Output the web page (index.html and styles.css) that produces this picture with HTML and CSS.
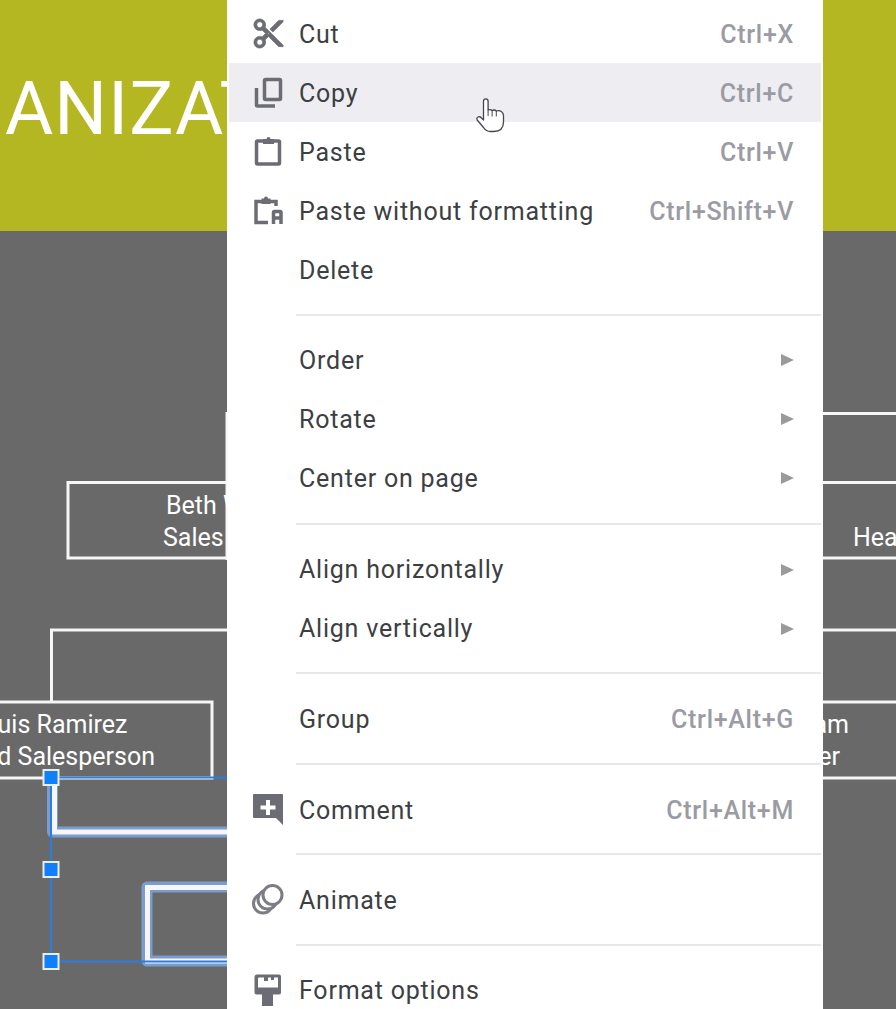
FILE: index.html
```html
<!DOCTYPE html>
<html>
  <head>
    <title>Slide context menu</title>
    <link rel="stylesheet" href="styles.css">
  </head>
  <body>
    <div id="slide">
      <div id="slide-header"><span id="slide-title">ANIZATION</span></div>

      <!-- Org chart lines and the selected group -->
      <svg id="chart" width="896" height="1009" viewBox="0 0 896 1009">
        <g class="line">
          <path d="M227 412V560"/>
          <path d="M823 413.500H896"/>
          <path d="M230 482.500H68V558H230"/>
          <path d="M823 482.500H896"/>
          <path d="M823 558H896"/>
          <path d="M230 630H51.500V702"/>
          <path d="M823 630H896"/>
          <path d="M0 702H212V778H0"/>
          <path d="M823 702H896"/>
          <path d="M823 778H896"/>
        </g>
        <g class="glow">
          <path d="M52.500 784V832H230"/>
          <path d="M230 887H147V961H230"/>
        </g>
        <g class="line-thick">
          <path d="M54.500 784V832H230"/>
          <path d="M230 887.500H147.500V961H230"/>
        </g>
        <path class="frame" d="M230 777.500H51V961.500H230"/>
        <rect class="handle" x="43.500" y="770" width="15" height="15"/>
        <rect class="handle" x="43.500" y="862" width="15" height="15"/>
        <rect class="handle" x="43.500" y="954" width="15" height="15"/>
      </svg>

      <div class="node-text beth"><div class="beth-name">Beth W</div><div>Sales</div></div>
      <div class="node-text luis"><div>Luis Ramirez</div><div>Lead Salesperson</div></div>
      <div class="node-text head">Hea</div>
      <div class="node-text team"><div>am</div><div class="team-role">er</div></div>
    </div>

    <div id="menu">
      <div class="item">
        <svg class="icon" viewBox="0 0 24 24"><path class="solid heavy" d="M9.640 7.640c.23-.5.36-1.050.36-1.640 0-2.210-1.790-4-4-4S2 3.790 2 6s1.790 4 4 4c.59 0 1.140-.13 1.640-.36L10 12l-2.360 2.360C7.140 14.130 6.590 14 6 14c-2.210 0-4 1.790-4 4s1.790 4 4 4 4-1.790 4-4c0-.59-.13-1.140-.36-1.640L12 14l7 7h3v-1L9.640 7.640zM6 8c-1.100 0-2-.89-2-2s.9-2 2-2 2 .89 2 2-.9 2-2 2zm0 12c-1.100 0-2-.89-2-2s.9-2 2-2 2 .89 2 2-.9 2-2 2zm6-7.500c-.28 0-.5-.22-.5-.5s.22-.5.5-.5.5.22.5.5-.22.5-.5.5zM19 3l-6 6 2 2 7-7V3h-3z"/></svg>
        <span class="label">Cut</span><span class="keys">Ctrl+X</span>
      </div>
      <div class="item active">
        <svg class="icon" viewBox="0 0 35 35"><path class="outline" d="M5.500 13V30a1 1 0 0 0 1 1H24"/><rect class="outline" x="13.500" y="4.500" width="16" height="20" rx="1"/></svg>
        <span class="label">Copy</span><span class="keys">Ctrl+C</span>
      </div>
      <div class="item">
        <svg class="icon" viewBox="0 0 35 35"><rect class="outline" x="5.500" y="7" width="23" height="23" rx="1"/><path class="solid" d="M12 5h3.500a2 2 0 0 1 4 0H23v5H12z"/></svg>
        <span class="label">Paste</span><span class="keys">Ctrl+V</span>
      </div>
      <div class="item">
        <svg class="icon" viewBox="0 0 35 35"><path class="outline" d="M17 29.500H5V8.500H25V13"/><path class="solid" d="M10.500 5.500h2.500a2 2 0 0 1 4 0h2.500V11h-9z"/><path class="outline" d="M22.500 31V19.500a1 1 0 0 1 1-1h5.500a1 1 0 0 1 1 1V31M22.500 25H30"/></svg>
        <span class="label">Paste without formatting</span><span class="keys">Ctrl+Shift+V</span>
      </div>
      <div class="item">
        <span class="icon"></span>
        <span class="label">Delete</span>
      </div>
      <div class="sep sep-short"></div>
      <div class="item">
        <span class="icon"></span>
        <span class="label">Order</span><span class="arrow"></span>
      </div>
      <div class="item">
        <span class="icon"></span>
        <span class="label">Rotate</span><span class="arrow"></span>
      </div>
      <div class="item">
        <span class="icon"></span>
        <span class="label">Center on page</span><span class="arrow"></span>
      </div>
      <div class="sep sep-tall"></div>
      <div class="item">
        <span class="icon"></span>
        <span class="label">Align horizontally</span><span class="arrow"></span>
      </div>
      <div class="item">
        <span class="icon"></span>
        <span class="label">Align vertically</span><span class="arrow"></span>
      </div>
      <div class="sep"></div>
      <div class="item">
        <span class="icon"></span>
        <span class="label">Group</span><span class="keys">Ctrl+Alt+G</span>
      </div>
      <div class="sep sep-low"></div>
      <div class="item">
        <svg class="icon" viewBox="0 0 35 35"><path class="solid" d="M3 2H31a1 1 0 0 1 1 1V33L25 26H3a1 1 0 0 1-1-1V3a1 1 0 0 1 1-1z"/><path class="cut-out" d="M15 8h4v5.500h5.500v4H19V23h-4v-5.500H9.500v-4H15z"/></svg>
        <span class="label">Comment</span><span class="keys">Ctrl+Alt+M</span>
      </div>
      <div class="sep sep-high"></div>
      <div class="item">
        <svg class="icon" viewBox="0 0 35 35">
          <circle class="ring" cx="12" cy="21.500" r="9.500"/>
          <circle class="ring" cx="16.500" cy="17.500" r="9.500"/>
          <circle class="ring" cx="21.500" cy="13" r="9.500"/>
        </svg>
        <span class="label">Animate</span>
      </div>
      <div class="sep"></div>
      <div class="item">
        <svg class="icon" viewBox="0 0 35 35"><path class="solid" d="M6 2.500H28a2 2 0 0 1 2 2V20.500a2 2 0 0 1-2 2H22V34H11V22.500H5.500a2 2 0 0 1-2-2V5a2.500 2.500 0 0 1 2.500-2.500z"/><path class="cut-out" d="M8 5.500H13V9H17V5.500H20V8H23V5.500H27V15.500H7V6.500a1 1 0 0 1 1-1z"/></svg>
        <span class="label">Format options</span>
      </div>
    </div>

    <!-- Mouse pointer -->
    <svg id="pointer" width="30" height="35" viewBox="0 0 30 35">
      <path class="hand" d="M7.500 22V3.200a2.300 2.300 0 0 1 4.600 0V12q2.500-1 4 .6 2.500-1.300 4.200.4 3-1 5 .5 2.200 1.500 2.200 4V24q0 9.500-10 9.500h-3q-4.500 0-7-4L1.200 22q-1-2.200.8-3 2-.8 3.500 1z"/>
      <path class="hand-lines" d="M12.100 12V18M16.100 12.600V18.500M20.300 13V18.500"/>
    </svg>
  </body>
</html>
```

FILE: styles.css
```css
body { margin: 0; width: 896px; height: 1009px; overflow: hidden; background: #696969; font-family: Roboto, "Liberation Sans", sans-serif; }

/* Slide behind the menu */
#slide { position: relative; width: 896px; height: 1009px; overflow: hidden; }

#slide-header { height: 231px; background: #b4b722; overflow: hidden; }

#slide-title {
  display: block;
  padding: 65px 0 0 5px;
  font-size: 74px;
  line-height: 88px;
  letter-spacing: 1px;
  color: #fff;
  white-space: nowrap;
}

#chart { position: absolute; top: 0; left: 0; fill: none; }
#chart .line path { stroke: #f6f6f6; stroke-width: 3; }
#chart .line-thick path { stroke: #f6f6f8; stroke-width: 5; }
#chart .glow path { stroke: #7b9ccd; stroke-width: 11; stroke-linejoin: round; }
#chart .frame { stroke: #2a7de1; stroke-width: 2; }
#chart .handle { fill: #1080fa; stroke: #ececec; stroke-width: 2; }

.node-text { position: absolute; font-size: 25px; line-height: 32px; color: #fff; white-space: nowrap; }
.beth { left: 163px; top: 490px; }
.beth-name { margin-left: 3px; }
.luis { left: -44px; top: 709px; width: 200px; text-align: center; }
.head { left: 853px; top: 522px; }
.team { right: 47px; top: 709px; text-align: right; }
.team-role { margin-right: 9px; }

/* Context menu */
#menu {
  position: absolute;
  top: 0;
  left: 227px;
  width: 592px;
  height: 1009px;
  padding: 4px 2px 0;
  overflow: hidden;
  background: #fff;
}

.item {
  display: flex;
  align-items: center;
  height: 59px;
  padding: 0 27px 0 22px;
  font-size: 25px;
  letter-spacing: 0.78px;
  color: #3c4043;
}

.item.active { background: #eeeef2; }

.icon { flex: none; width: 35px; height: 35px; margin-right: 13px; }

.label { flex: 1; padding-top: 2px; white-space: nowrap; }

.keys { padding-top: 2px; color: #9a9ba3; font-weight: 500; letter-spacing: 0.7px; white-space: nowrap; }

.arrow {
  width: 0;
  height: 0;
  margin-top: 2px;
  border-left: 13px solid #9a9a9a;
  border-top: 6.500px solid transparent;
  border-bottom: 6.500px solid transparent;
}

.sep { height: 2px; margin: 15px 0 14.500px 67px; background: #e8e8ec; }
.sep-short { margin-bottom: 13.500px; }
.sep-tall { margin-top: 16px; }
.sep-low { margin-bottom: 15.500px; }
.sep-high { margin-top: 14px; }

.solid { fill: #6c6d74; }
.solid.heavy { stroke: #6c6d74; stroke-width: 0.500; }
.outline { fill: none; stroke: #6c6d74; stroke-width: 3.500; }
.cut-out { fill: #fff; }
.ring { fill: #fff; stroke: #7c7d84; stroke-width: 3; }

#pointer { position: absolute; left: 476px; top: 98px; }
.hand { fill: #fff; stroke: #45464b; stroke-width: 1.300; stroke-linejoin: round; }
.hand-lines { fill: none; stroke: #45464b; stroke-width: 1; }
```
